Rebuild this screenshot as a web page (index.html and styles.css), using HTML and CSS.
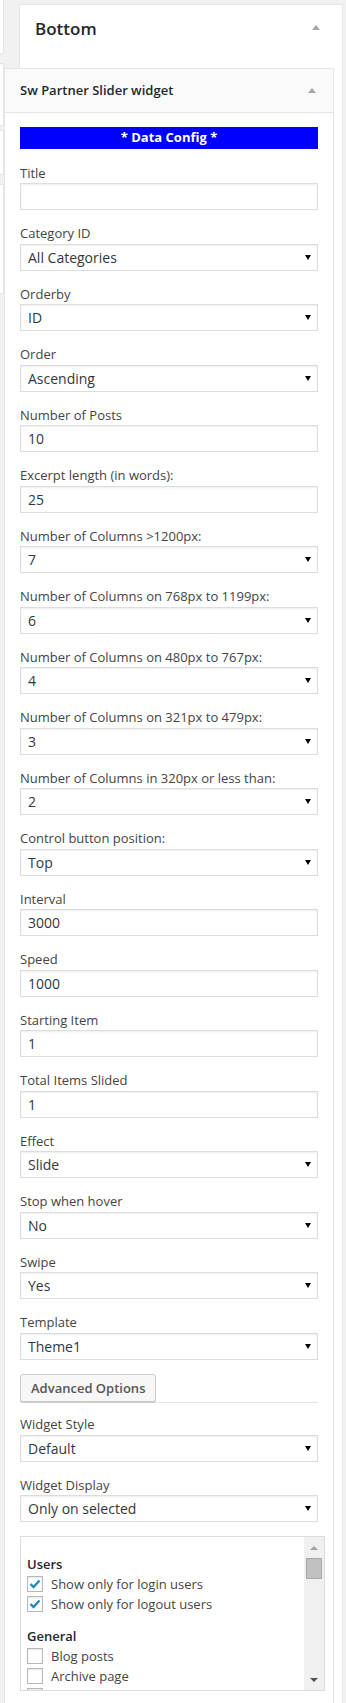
FILE: index.html
```html
<!DOCTYPE html>
<html lang="en">
<head>
    <meta charset="UTF-8">
    <meta name="viewport" content="width=device-width, initial-scale=1.0">
    <title>Widgets - Bottom</title>
    <link rel="stylesheet" href="styles.css">
</head>
<body>
    <div class="page">
        <div class="left-col">
            <div class="stub stub-a"></div>
            <div class="stub stub-b"></div>
            <div class="stub stub-c"></div>
            <div class="stub stub-d"></div>
        </div>

        <div class="sidebar">
            <div class="sidebar-name">
                <h2>Bottom</h2>
                <span class="toggle-arrow"></span>
            </div>

            <div class="widgets">
                <div class="widget">
                    <div class="widget-top">
                        <h3>Sw Partner Slider widget</h3>
                        <span class="toggle-arrow"></span>
                    </div>

                    <div class="widget-inside">
                        <div class="section-bar">* Data Config *</div>

                        <div class="field">
                            <label>Title</label>
                            <input type="text" value="">
                        </div>
                        <div class="field">
                            <label>Category ID</label>
                            <div class="select-wrap"><select><option>All Categories</option></select></div>
                        </div>
                        <div class="field">
                            <label>Orderby</label>
                            <div class="select-wrap"><select><option>ID</option></select></div>
                        </div>
                        <div class="field">
                            <label>Order</label>
                            <div class="select-wrap"><select><option>Ascending</option></select></div>
                        </div>
                        <div class="field">
                            <label>Number of Posts</label>
                            <input type="text" value="10">
                        </div>
                        <div class="field">
                            <label>Excerpt length (in words):</label>
                            <input type="text" value="25">
                        </div>
                        <div class="field">
                            <label>Number of Columns &gt;1200px:</label>
                            <div class="select-wrap"><select><option>7</option></select></div>
                        </div>
                        <div class="field">
                            <label>Number of Columns on 768px to 1199px:</label>
                            <div class="select-wrap"><select><option>6</option></select></div>
                        </div>
                        <div class="field">
                            <label>Number of Columns on 480px to 767px:</label>
                            <div class="select-wrap"><select><option>4</option></select></div>
                        </div>
                        <div class="field">
                            <label>Number of Columns on 321px to 479px:</label>
                            <div class="select-wrap"><select><option>3</option></select></div>
                        </div>
                        <div class="field">
                            <label>Number of Columns in 320px or less than:</label>
                            <div class="select-wrap"><select><option>2</option></select></div>
                        </div>
                        <div class="field">
                            <label>Control button position:</label>
                            <div class="select-wrap"><select><option>Top</option></select></div>
                        </div>
                        <div class="field">
                            <label>Interval</label>
                            <input type="text" value="3000">
                        </div>
                        <div class="field">
                            <label>Speed</label>
                            <input type="text" value="1000">
                        </div>
                        <div class="field">
                            <label>Starting Item</label>
                            <input type="text" value="1">
                        </div>
                        <div class="field">
                            <label>Total Items Slided</label>
                            <input type="text" value="1">
                        </div>
                        <div class="field">
                            <label>Effect</label>
                            <div class="select-wrap"><select><option>Slide</option></select></div>
                        </div>
                        <div class="field">
                            <label>Stop when hover</label>
                            <div class="select-wrap"><select><option>No</option></select></div>
                        </div>
                        <div class="field">
                            <label>Swipe</label>
                            <div class="select-wrap"><select><option>Yes</option></select></div>
                        </div>
                        <div class="field">
                            <label>Template</label>
                            <div class="select-wrap"><select><option>Theme1</option></select></div>
                        </div>

                        <div class="advanced-tabs">
                            <button class="button">Advanced Options</button>
                        </div>

                        <div class="field">
                            <label>Widget Style</label>
                            <div class="select-wrap"><select><option>Default</option></select></div>
                        </div>
                        <div class="field">
                            <label>Widget Display</label>
                            <div class="select-wrap"><select><option>Only on selected</option></select></div>
                        </div>

                        <div class="checklist">
                            <div class="checklist-items">
                                <h4>Users</h4>
                                <label class="check-row">
                                    <span class="checkbox checked">
                                        <svg width="14" height="14" viewBox="0 0 14 14"><polyline points="2.5,7 5.5,10 11.5,3.5" fill="none" stroke="#1e8cbe" stroke-width="2.4"/></svg>
                                    </span>
                                    Show only for login users
                                </label>
                                <label class="check-row">
                                    <span class="checkbox checked">
                                        <svg width="14" height="14" viewBox="0 0 14 14"><polyline points="2.5,7 5.5,10 11.5,3.5" fill="none" stroke="#1e8cbe" stroke-width="2.4"/></svg>
                                    </span>
                                    Show only for logout users
                                </label>

                                <h4 class="group-gap">General</h4>
                                <label class="check-row"><span class="checkbox"></span>Blog posts</label>
                                <label class="check-row"><span class="checkbox"></span>Archive page</label>
                                <label class="check-row"><span class="checkbox"></span>Category page</label>
                            </div>
                            <div class="fake-scroll">
                                <span class="scroll-up"></span>
                                <span class="scroll-thumb"></span>
                                <span class="scroll-space"></span>
                                <span class="scroll-down"></span>
                            </div>
                        </div>
                    </div>
                </div>
            </div>
        </div>
    </div>
</body>
</html>
```

FILE: styles.css
```css
body {
    margin: 0;
    background-color: #f1f1f1;
    font-family: 'Open Sans', 'Liberation Sans', sans-serif;
    font-size: 13px;
    color: #444;
}
.page {
    display: flex;
    align-items: flex-start;
    height: 1703px;
    overflow: hidden;
}

/* left column, mostly hidden */
.left-col {
    width: 4px;
    flex: none;
    display: flex;
    flex-direction: column;
}
.stub {
    background: #fff;
    border: 1px solid #e5e5e5;
    border-left: none;
    box-sizing: border-box;
}
.stub-a { height: 54px; border-top: none; }
.stub-b { height: 63px; margin-top: 9px; }
.stub-c { height: 45px; margin-top: 4px; }
.stub-d { height: 110px; margin-top: 9px; }

.sidebar {
    flex: none;
    width: 324px;
    margin-left: 15px;
    margin-top: 4px;
    background: #fff;
    border: 1px solid #e5e5e5;
    box-sizing: border-box;
    min-height: 1760px;
}
.sidebar-name {
    position: relative;
    padding: 15px 15px 31px 15px;
}
.sidebar-name h2 {
    margin: 0;
    font-size: 17px;
    font-weight: 600;
    line-height: 17px;
    color: #23282d;
}
.toggle-arrow {
    position: absolute;
    width: 0;
    height: 0;
    border-left: 4px solid transparent;
    border-right: 4px solid transparent;
    border-bottom: 5px solid #a6a6a6;
}
.sidebar-name .toggle-arrow {
    right: 22px;
    top: 20px;
}

.widgets {
    padding: 0 8px;
}
.widget {
    margin-left: -24px;
    background: #fff;
    border: 1px solid #e5e5e5;
    position: relative;
}
.widget-top {
    position: relative;
    background: #fafafa;
    border-bottom: 1px solid #e5e5e5;
}
.widget-top h3 {
    margin: 0;
    padding: 15px;
    font-size: 13px;
    font-weight: 600;
    line-height: 1;
    color: #23282d;
}
.widget-top .toggle-arrow {
    right: 17px;
    top: 19px;
}
.widget-inside {
    padding: 14px 15px 15px;
}
.section-bar {
    background: #0000ff;
    color: #fff;
    font-weight: 700;
    text-align: center;
    height: 22px;
    line-height: 21px;
    margin-bottom: 14.5px;
}

.field {
    display: flex;
    flex-direction: column;
    margin-bottom: 14px;
}
.field label {
    line-height: 19.5px;
    color: #444;
}
.field input,
.field select {
    width: 100%;
    height: 27px;
    box-sizing: border-box;
    margin: 0;
    padding: 0 7px;
    border: 1px solid #ddd;
    border-radius: 0;
    background: #fff;
    box-shadow: inset 0 1px 2px rgba(0, 0, 0, 0.07);
    font-family: 'Open Sans', 'Liberation Sans', sans-serif;
    font-size: 14px;
    color: #32373c;
    outline: none;
}
.field select {
    -webkit-appearance: none;
    appearance: none;
}
.select-wrap {
    position: relative;
}
.select-wrap::after {
    content: "";
    position: absolute;
    right: 7px;
    top: 11px;
    border-left: 3px solid transparent;
    border-right: 3px solid transparent;
    border-top: 5px solid #000;
}

.advanced-tabs {
    margin-top: 1.5px;
    margin-bottom: 12.5px;
    border-bottom: 1px solid #e5e5e5;
    display: flex;
}
.button {
    height: 28px;
    padding: 0 10px;
    background: #f7f7f7;
    border: 1px solid #ccc;
    border-radius: 3px;
    box-shadow: 0 1px 0 #ccc;
    font-family: 'Open Sans', 'Liberation Sans', sans-serif;
    font-size: 13px;
    font-weight: 600;
    color: #555;
    cursor: pointer;
}

.checklist {
    display: flex;
    height: 155px;
    margin-top: 1px;
    width: calc(100% + 7px);
    box-sizing: border-box;
    border: 1px solid #ddd;
    overflow: hidden;
}
.checklist-items {
    flex: 1;
    padding: 17px 6px 0;
    overflow: hidden;
}
.checklist-items h4 {
    margin: 0;
    font-size: 13px;
    font-weight: 600;
    line-height: 20px;
    color: #23282d;
}
.checklist-items .group-gap {
    margin-top: 12px;
}
.check-row {
    display: flex;
    align-items: center;
    gap: 8px;
    height: 20px;
    color: #444;
    white-space: nowrap;
}
.checkbox {
    width: 16px;
    height: 16px;
    box-sizing: border-box;
    flex: none;
    border: 1px solid #b4b9be;
    background: #fff;
    box-shadow: inset 0 1px 2px rgba(0, 0, 0, 0.1);
    display: flex;
    align-items: center;
    justify-content: center;
}

/* fake scrollbar of the list */
.fake-scroll {
    width: 20px;
    flex: none;
    background: #f0f0f0;
    display: flex;
    flex-direction: column;
    align-items: center;
    padding: 9px 0 8px;
    box-sizing: border-box;
}
.scroll-up {
    width: 0;
    height: 0;
    border-left: 4px solid transparent;
    border-right: 4px solid transparent;
    border-bottom: 4px solid #a3a3a3;
}
.scroll-thumb {
    width: 16px;
    height: 21px;
    margin-top: 8px;
    box-sizing: border-box;
    background: #c1c1c1;
    border: 1px solid #a8a8a8;
}
.scroll-space {
    flex: 1;
}
.scroll-down {
    width: 0;
    height: 0;
    border-left: 4px solid transparent;
    border-right: 4px solid transparent;
    border-top: 4px solid #505050;
}
```
